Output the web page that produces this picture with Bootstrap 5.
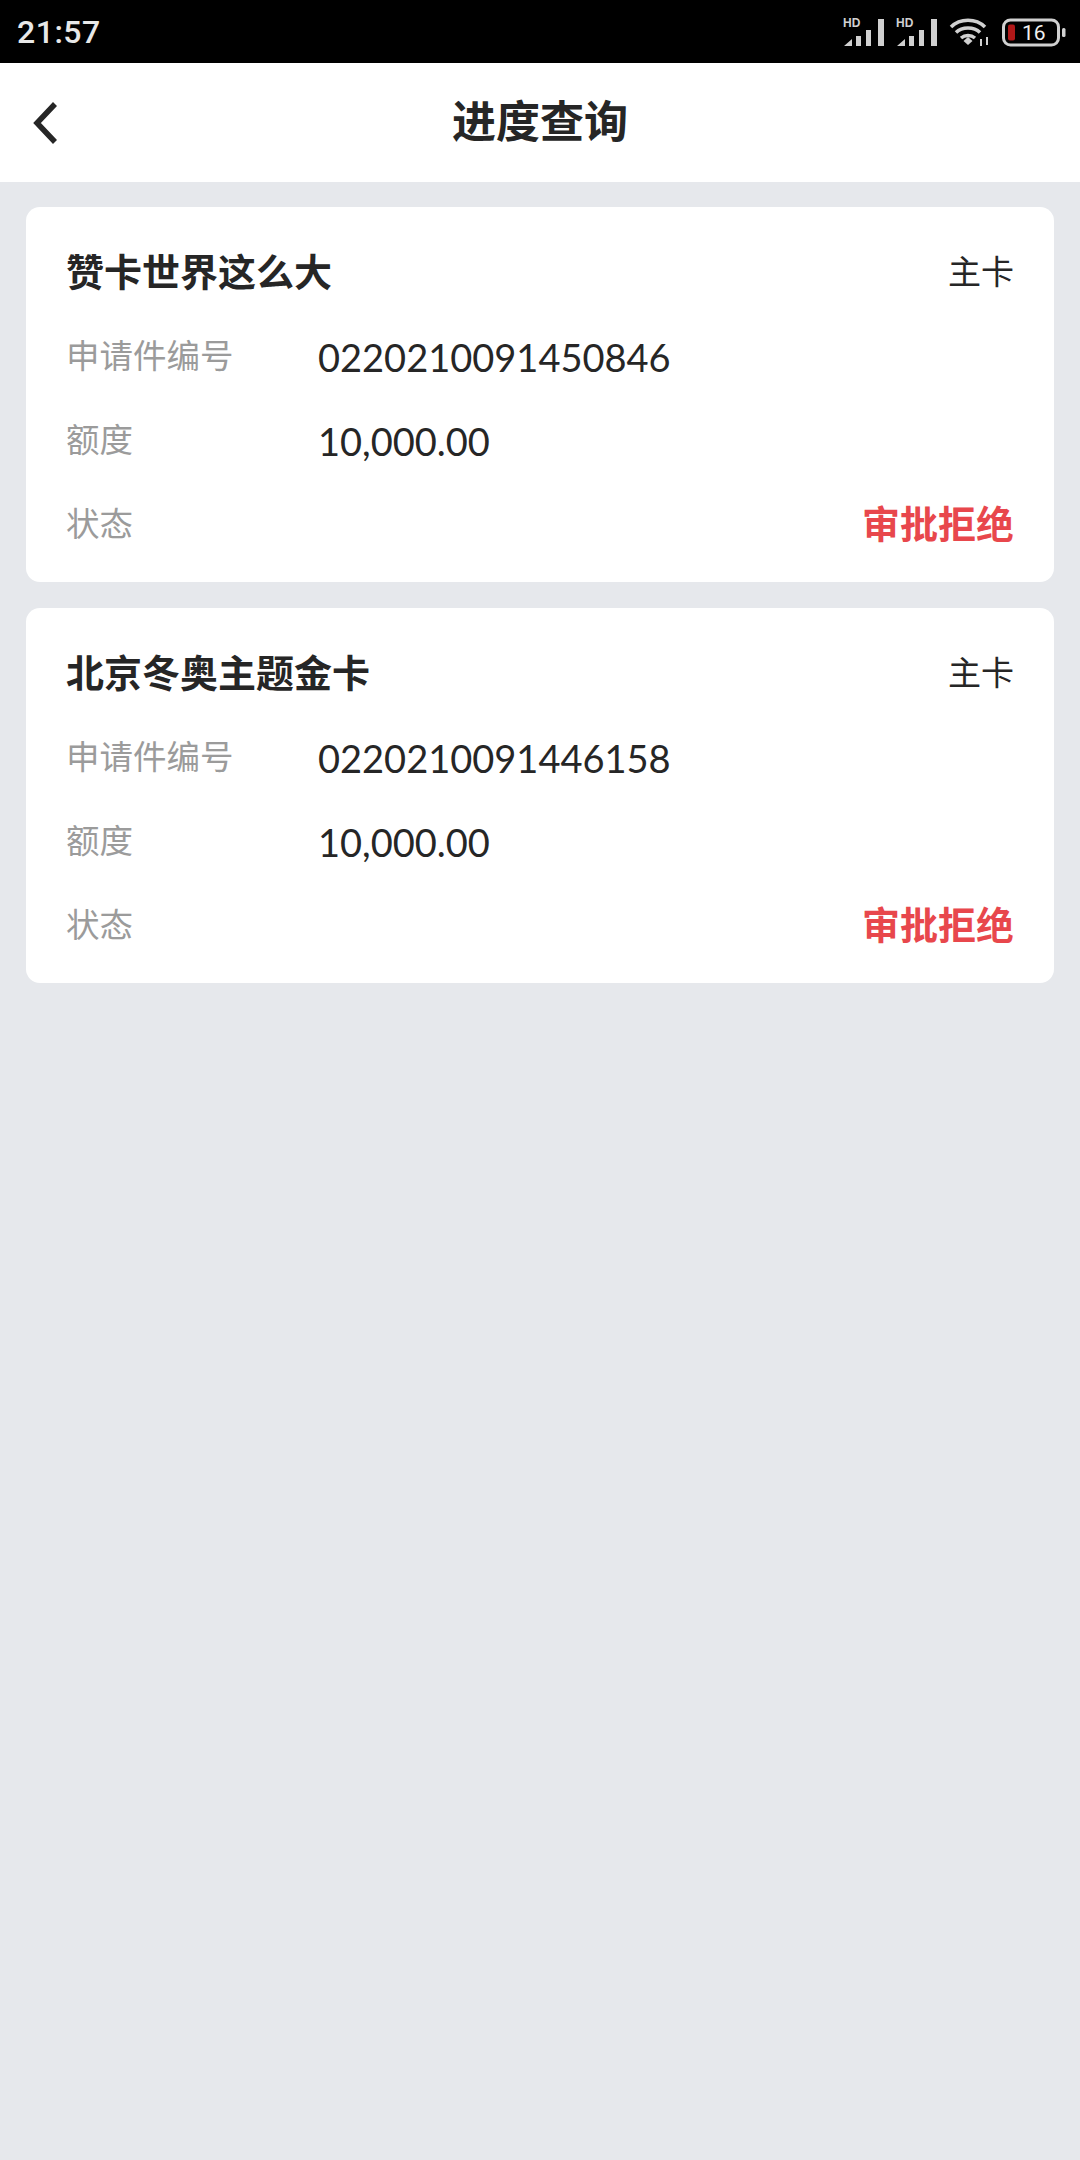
<!DOCTYPE html>
<html lang="zh-CN">
<head>
    <meta charset="UTF-8">
    <meta name="viewport" content="width=device-width, initial-scale=1.0">
    <title>进度查询</title>
    <link href="https://cdn.jsdelivr.net/npm/bootstrap@5.3.2/dist/css/bootstrap.min.css" rel="stylesheet">
    <style>
        body {
            background: #e6e8ec;
            color: #262626;
            font-family: "Liberation Sans", "Noto Sans CJK SC", sans-serif;
            min-height: 2160px;
        }
        .status-strip {
            height: 63px;
            background: #000;
            color: #e8e8e8;
            padding: 0 14px 0 17px;
        }
        .status-time {
            font-family: Roboto, sans-serif;
            font-size: 32px;
            font-weight: 500;
            letter-spacing: .5px;
            line-height: 1;
        }
        .status-icons {
            gap: 11px;
        }
        .top-head {
            height: 119px;
            background: #fff;
            padding-left: 33px;
        }
        .top-head-title {
            font-size: 44px;
            font-weight: 700;
            line-height: 1;
        }
        .back-icon {
            width: 26px;
            height: 44px;
        }
        .apply-list {
            padding: 25px 26px;
            gap: 26px;
        }
        .apply-card {
            height: 375px;
            border: 0;
            border-radius: 14px;
            padding: 24px 40px 0;
        }
        .apply-row {
            height: 84px;
        }
        .apply-name {
            font-size: 38px;
            font-weight: 700;
        }
        .apply-type {
            font-size: 33px;
        }
        .apply-label {
            width: 252px;
            font-size: 33.5px;
            color: #9b9b9b;
        }
        .apply-value {
            font-family: Lato, sans-serif;
            font-size: 38px;
            line-height: 1;
        }
        .apply-state {
            font-size: 38px;
            font-weight: 700;
            color: #e8474c;
        }
    </style>
</head>
<body>
<div class="status-strip d-flex align-items-center justify-content-between">
    <span class="status-time">21:57</span>
    <div class="status-icons d-flex align-items-center">
        <svg width="42" height="30" viewBox="0 0 42 30"><text x="0" y="10" font-family="Liberation Sans" font-weight="700" font-size="12" fill="#d0d0d0">HD</text><path d="M1 29 9 22V29ZM13 19H18V29H13ZM23 13H28V29H23ZM35 2H41V29H35Z" fill="#d0d0d0"/></svg>
        <svg width="42" height="30" viewBox="0 0 42 30"><text x="0" y="10" font-family="Liberation Sans" font-weight="700" font-size="12" fill="#d0d0d0">HD</text><path d="M1 29 9 22V29ZM13 19H18V29H13ZM23 13H28V29H23ZM35 2H41V29H35Z" fill="#d0d0d0"/></svg>
        <svg width="42" height="30" viewBox="0 0 42 30" fill="none" stroke="#d0d0d0" stroke-width="3.5"><path d="M2 10C11 1 27 1 36 10M7 15.500C13 9.500 25 9.500 31 15.500M12 21C16 17.500 22 17.500 26 21"/><path d="M14.500 24 19 20 23.500 24 19 28Z" fill="#d0d0d0" stroke="none"/><path d="M32 22V29M38 20V28" stroke-width="2"/></svg>
        <svg width="64" height="30" viewBox="0 0 64 30"><rect x="1.500" y="3" width="55" height="25" rx="7" fill="none" stroke="#d0d0d0" stroke-width="3"/><rect x="6" y="7.500" width="7" height="16" rx="2" fill="#b01818"/><text x="20" y="23" font-family="Roboto" font-size="21" fill="#f0f0f0">16</text><rect x="60" y="11" width="3.500" height="9" rx="1.500" fill="#d0d0d0"/></svg>
    </div>
</div>

<div class="top-head position-relative d-flex align-items-center">
    <svg class="back-icon" viewBox="0 0 26 44" fill="none" stroke="#262626" stroke-width="5.500"><path d="M22 3 4 22 22 41"/></svg>
    <div class="top-head-title position-absolute top-50 start-50 translate-middle">进度查询</div>
</div>

<div id="applies" class="apply-list d-flex flex-column"></div>

<script src="https://cdn.jsdelivr.net/npm/bootstrap@5.3.2/dist/js/bootstrap.bundle.min.js"></script>
<script>
    const applies = [
        { name: '赞卡世界这么大', no: '0220210091450846' },
        { name: '北京冬奥主题金卡', no: '0220210091446158' }
    ];

    const list = document.getElementById('applies');
    applies.forEach(item => {
        list.innerHTML += `
            <div class="card apply-card">
                <div class="apply-row d-flex align-items-center justify-content-between">
                    <span class="apply-name">${item.name}</span>
                    <span class="apply-type">主卡</span>
                </div>
                <div class="apply-row d-flex align-items-center">
                    <span class="apply-label">申请件编号</span>
                    <span class="apply-value">${item.no}</span>
                </div>
                <div class="apply-row d-flex align-items-center">
                    <span class="apply-label">额度</span>
                    <span class="apply-value">10,000.00</span>
                </div>
                <div class="apply-row d-flex align-items-center justify-content-between">
                    <span class="apply-label">状态</span>
                    <span class="apply-state">审批拒绝</span>
                </div>
            </div>`;
    });
</script>
</body>
</html>
